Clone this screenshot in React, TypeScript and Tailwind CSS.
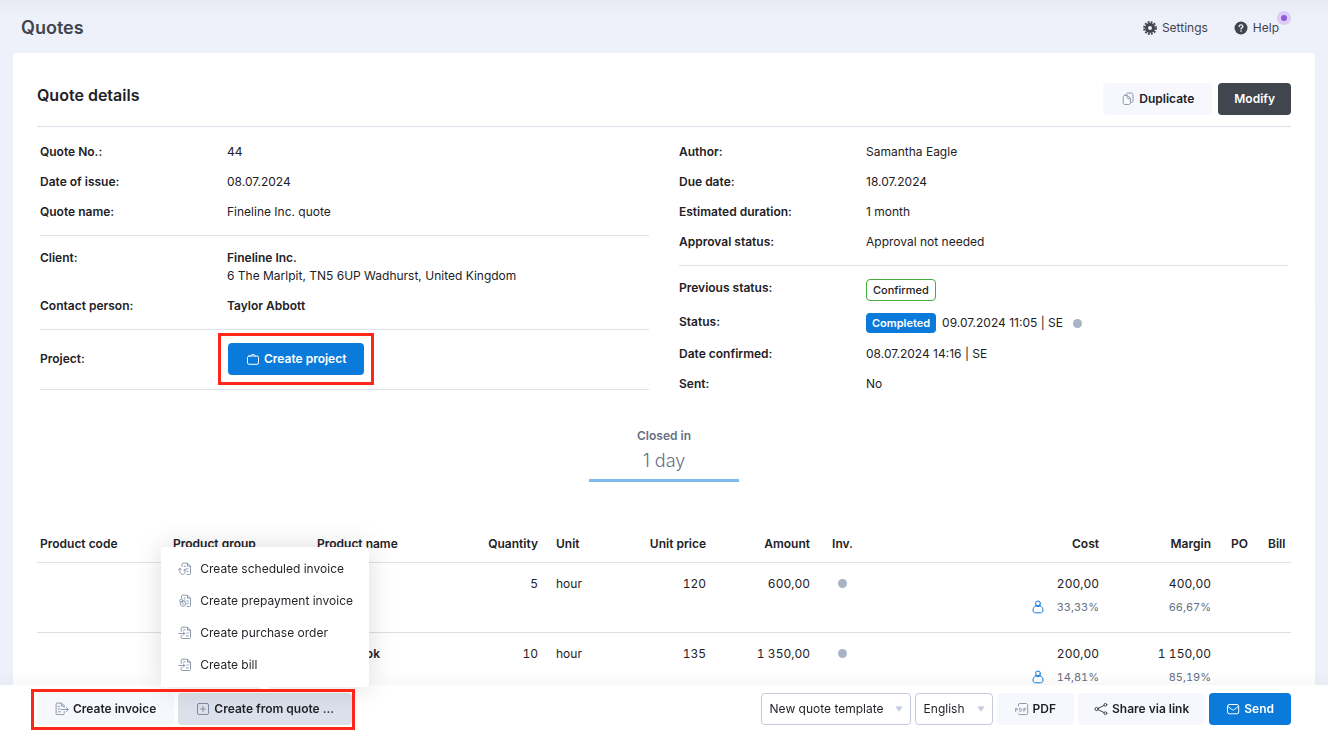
import type { ButtonHTMLAttributes, ReactNode } from "react";
import clsx from "clsx";

type IconProps = { className?: string };

function Icon({ className, children }: IconProps & { children: ReactNode }) {
  return (
    <svg
      viewBox="0 0 14 14"
      className={clsx("size-3.5 shrink-0", className)}
      fill="none"
      stroke="currentColor"
      strokeLinecap="round"
      strokeLinejoin="round"
      aria-hidden="true"
    >
      {children}
    </svg>
  );
}

const GearIcon = () => (
  <Icon>
    <circle cx="7" cy="7" r="3.5" strokeWidth="3" />
    <circle cx="7" cy="7" r="5.8" strokeWidth="2.2" strokeDasharray="1.8 1.24" strokeLinecap="butt" />
  </Icon>
);

const HelpIcon = () => (
  <Icon>
    <circle cx="7" cy="7" r="6.5" fill="currentColor" stroke="none" />
    <path d="M5.2 5.5C5.2 4.4 6 3.8 7 3.8s1.9.6 1.9 1.6C8.9 6.6 7 6.7 7 8" stroke="#eef0fa" strokeWidth="1.3" />
    <circle cx="7" cy="10.1" r=".8" fill="#eef0fa" stroke="none" />
  </Icon>
);

const CopyIcon = () => (
  <Icon className="text-[#8d9ab0]">
    <path d="M5.3 2.8V2.6c0-1 .6-1.6 1.6-1.6h3.2c1.2 0 1.9.7 1.9 1.9v6c0 1-.6 1.6-1.6 1.6h-.2" />
    <path d="M4 3.2h2.2l3.3 3.3v4.2c0 1.1-.7 1.8-1.8 1.8H4c-1.1 0-1.8-.7-1.8-1.8V5c0-1.1.7-1.8 1.8-1.8z" />
    <path d="M6.2 3.4v2.1c0 .7.4 1.1 1.1 1.1h2" />
  </Icon>
);

const BriefcaseIcon = () => (
  <Icon>
    <rect x="1.5" y="4" width="11" height="8.3" rx="1.5" />
    <path d="M4.7 4c.3-1 1-1.5 2.3-1.5S9 3 9.3 4" />
  </Icon>
);

const InvoiceOutIcon = () => (
  <Icon className="text-[#8d9ab0]">
    <path d="M9.2 9.5v2.2c0 .6-.3.9-.9.9H2c-.6 0-.9-.3-.9-.9V2c0-.6.3-.9.9-.9h4.5l2.7 2.7v1.5" />
    <path d="M6.3 1.3v2.7h2.7M3.2 4.5h1.2M3.2 7h2M3.2 9.8h2.3M6.5 7.5h6.8M11.4 5.5l2 2-2 2" />
  </Icon>
);

const PlusBoxIcon = () => (
  <Icon className="text-[#7f8ba1]">
    <rect x="1.5" y="1.5" width="11" height="11" rx="1.5" />
    <path d="M7 4.7v4.6M4.7 7h4.6" />
  </Icon>
);

const ScheduledIcon = () => (
  <Icon className="text-[#8d9ab0]">
    <path d="M4 4.5V2.2c0-.6.4-1 1-1h4.5l3 3v7.3c0 .6-.4 1-1 1H9" />
    <path d="M9.5 1.4v2.8h2.8M6.2 4.3h1.2M8.2 7h1.8M9 9.5h1" />
    <path d="M.7 7.7l1.1-1.4 1.5 1M1.8 6.600c-.6 3.400.5 5.600 2.700 5.700 1.700 0 2.800-1.100 2.800-2.700 0-.8-.3-1.500-.8-2M6.200 9V7.400h1.500" />
  </Icon>
);

const PrepaymentIcon = () => (
  <Icon className="text-[#8d9ab0]">
    <path d="M3.5 4V2.2c0-.6.4-1 1-1h5l3 3v7.3c0 .6-.4 1-1 1H9" />
    <path d="M9.5 1.4v2.8h2.8M6 4h1.3M8.8 7h1.5M9 9.6h1.3" />
    <circle cx="5" cy="9.6" r="2.7" />
    <circle cx="3.3" cy="6.8" r="1.6" />
    <path d="M4.2 9l1.6 1.2M6.3 5.8l.8.7" />
  </Icon>
);

const DocumentInIcon = () => (
  <Icon className="text-[#8d9ab0]">
    <path d="M3.2 5.3V2.2c0-.6.4-1 1-1h5.3l3 3v7.3c0 .6-.4 1-1 1H4.2c-.6 0-1-.4-1-1V9.7" />
    <path d="M9.5 1.4v2.8h2.8M5.5 3.9h1.6M9 7h1.3M8.2 9.9h2.1M.8 7.5h6M5 5.7l1.9 1.8L5 9.3" />
  </Icon>
);

const PdfIcon = () => (
  <Icon className="text-[#8d9ab0]">
    <path d="M3.5 4V2.8c0-.8.5-1.3 1.3-1.3H11c1 0 1.7.6 1.7 1.6v8.3c0 .8-.5 1.2-1.3 1.2H4.8c-.7 0-1.1-.3-1.3-.9" />
    <path
      d="M.6 9.4V6.3h1.2c1.2 0 1.2 1.7 0 1.7H.6M4.7 6.3v3.1h.7c2 0 2-3.1 0-3.1zM8.9 9.4V6.3h1.9M8.9 7.9h1.5"
      strokeWidth=".9"
    />
  </Icon>
);

const ShareIcon = () => (
  <Icon className="text-[#3d424b]">
    <circle cx="2.6" cy="7" r="1.6" />
    <circle cx="11.4" cy="2.8" r="1.4" />
    <circle cx="11.4" cy="11.2" r="1.4" />
    <path d="M4.2 6.3l5.9-2.9M4.2 7.7l5.9 2.9" />
  </Icon>
);

const MailIcon = () => (
  <Icon>
    <rect x="1.5" y="2.5" width="11.2" height="9.3" rx="1.8" />
    <path d="M2 4.5l3.9 3c.8.6 1.6.6 2.4 0l3.9-3" />
  </Icon>
);

const PersonIcon = () => (
  <Icon className="text-[#0a7bdb]">
    <circle cx="7" cy="3.4" r="2.4" />
    <path d="M4.9 5.6C3.3 6.5 2 8.3 2 10.1c0 1.8 1 2.7 2.5 2.7h5c1.5 0 2.5-.9 2.5-2.7 0-1.8-1.3-3.6-2.9-4.5" />
    <path d="M4.7 5.9c1.4.9 3.2.9 4.6 0" />
  </Icon>
);

type ButtonProps = ButtonHTMLAttributes<HTMLButtonElement> & {
  variant?: "light" | "active" | "dark" | "primary";
  icon?: ReactNode;
};

const variants = {
  light: "bg-[#f7f8fd] text-[#1e2126]",
  active: "bg-[#dce0ea] text-[#1e2126]",
  dark: "bg-[#41454e] text-white",
  primary: "bg-[#0a7bdb] text-white",
};

function Button({ variant = "light", icon, className, children, ...props }: ButtonProps) {
  return (
    <button
      type="button"
      className={clsx(
        "flex h-8 items-center gap-1 rounded font-semibold whitespace-nowrap",
        variants[variant],
        className ?? "px-[18px]",
      )}
      {...props}
    >
      {icon}
      {children}
    </button>
  );
}

function Row({ label, children }: { label: string; children: ReactNode }) {
  return (
    <div className="flex py-1.5">
      <dt className="w-[187px] shrink-0 font-semibold">{label}</dt>
      <dd className="min-w-0 flex-1">{children}</dd>
    </div>
  );
}

function Group({ last, children }: { last?: boolean; children: ReactNode }) {
  return <dl className={clsx("pt-[7px] pb-2", !last && "border-b border-[#dfe0ea]")}>{children}</dl>;
}

const Dot = () => <span className="inline-block size-[9px] rounded-full bg-[#a9b3c5]" />;

function Select({ label, options, className }: { label: string; options: string[]; className: string }) {
  return (
    <div className={clsx("relative", className)}>
      <select
        aria-label={label}
        className="h-8 w-full appearance-none rounded border border-[#c3cadb] bg-white pr-6 pl-2"
      >
        {options.map((o) => (
          <option key={o}>{o}</option>
        ))}
      </select>
      <svg viewBox="0 0 8 6" className="pointer-events-none absolute top-[13px] right-2 h-1.5 w-2" aria-hidden="true">
        <path d="M.5.5h7L4 5.7z" fill="#c3cadb" />
      </svg>
    </div>
  );
}

const items = [
  { name: "Planning", qty: "5", unit: "hour", price: "120", amount: "600,00", cost: "200,00", costPct: "33,33%", margin: "400,00", marginPct: "66,67%" },
  { name: "Guidebook", qty: "10", unit: "hour", price: "135", amount: "1 350,00", cost: "200,00", costPct: "14,81%", margin: "1 150,00", marginPct: "85,19%" },
];

const menu = [
  { label: "Create scheduled invoice", icon: <ScheduledIcon /> },
  { label: "Create prepayment invoice", icon: <PrepaymentIcon /> },
  { label: "Create purchase order", icon: <DocumentInIcon /> },
  { label: "Create bill", icon: <DocumentInIcon /> },
];

function ItemsTable() {
  return (
    <table className="w-full table-fixed text-left leading-[18px]">
      <colgroup>
        <col className="w-[127px]" />
        <col className="w-36" />
        <col className="w-[132px]" />
        <col className="w-[107px]" />
        <col className="w-[73px]" />
        <col className="w-[95px]" />
        <col className="w-[104px]" />
        <col className="w-[47px]" />
        <col />
        <col className="w-28" />
        <col className="w-[39px]" />
        <col className="w-8" />
      </colgroup>
      <thead>
        <tr className="h-[38px] border-b border-[#dbe0ea] whitespace-nowrap [&>th]:pt-0.5 [&>th]:font-semibold">
          <th className="pl-[3px]">Product code</th>
          <th className="pl-[9px]">Product group</th>
          <th className="pl-[9px]">Product name</th>
          <th className="pr-[9px] text-right">Quantity</th>
          <th className="pl-[9px]">Unit</th>
          <th className="pr-[9px] text-right">Unit price</th>
          <th className="pr-[9px] text-right">Amount</th>
          <th className="text-center">Inv.</th>
          <th className="pr-[9px] text-right">Cost</th>
          <th className="pr-[9px] text-right">Margin</th>
          <th className="text-center">PO</th>
          <th className="pl-[9px]">Bill</th>
        </tr>
      </thead>
      <tbody>
        {items.map((item) => (
          <tr key={item.name} className="h-[70px] border-b border-[#dbdfe5] align-top tabular-nums [&>td]:pt-3">
            <td></td>
            <td></td>
            <td className="pl-[9px] font-semibold">{item.name}</td>
            <td className="pr-[9px] text-right">{item.qty}</td>
            <td className="pl-[9px]">{item.unit}</td>
            <td className="pr-[9px] text-right">{item.price}</td>
            <td className="pr-[9px] text-right">{item.amount}</td>
            <td className="text-center">
              <Dot />
            </td>
            <td className="pr-[9px] text-right">
              {item.cost}
              <div className="mt-[5px] flex items-center justify-end gap-3 text-[11px] leading-[18px] text-[#667085]">
                <PersonIcon />
                {item.costPct}
              </div>
            </td>
            <td className="pr-[9px] text-right">
              {item.margin}
              <div className="mt-[5px] text-[11px] leading-[18px] text-[#667085]">{item.marginPct}</div>
            </td>
            <td></td>
            <td></td>
          </tr>
        ))}
      </tbody>
    </table>
  );
}

function App() {
  return (
    <div className="flex h-screen flex-col bg-[#eef0fa] font-['Inter',sans-serif] text-xs leading-[18px] text-[#1e2126]">
      <header className="flex h-[53px] shrink-0 items-center bg-linear-to-b from-[#e7eaf3] to-[#eef0fa] to-35% pt-0.5 pr-[49px] pl-[21px] text-[#41454e]">
        <h1 className="text-lg font-semibold">Quotes</h1>
        <nav className="ml-auto flex items-center gap-[26px]">
          <a href="#settings" className="flex items-center gap-[5px]">
            <GearIcon />
            Settings
          </a>
          <a href="#help" className="relative flex items-center gap-[5px]">
            <HelpIcon />
            Help
            <span className="absolute -top-2 -right-3 grid size-3.5 place-items-center rounded-full bg-[#dccbf7]">
              <span className="size-1.5 rounded-full bg-[#8f5bd6]" />
            </span>
          </a>
        </nav>
      </header>

      <main className="mx-[13px] min-h-0 flex-1 overflow-y-auto rounded-t bg-white px-6 pt-[30px] [scrollbar-width:none]">
        <div className="flex items-start gap-1.5 border-b border-[#dbe0ea] pb-[11px]">
          <h2 className="mr-auto text-base font-semibold">Quote details</h2>
          <Button icon={<CopyIcon />}>Duplicate</Button>
          <Button variant="dark" className="px-4">Modify</Button>
        </div>

        <section className="grid grid-cols-2 gap-[30px] px-[3px] pt-[3px]">
          <div>
            <Group>
              <Row label="Quote No.:">44</Row>
              <Row label="Date of issue:">08.07.2024</Row>
              <Row label="Quote name:">Fineline Inc. quote</Row>
            </Group>
            <Group>
              <Row label="Client:">
                <div className="font-semibold">Fineline Inc.</div>
                6 The Marlpit, TN5 6UP Wadhurst, United Kingdom
              </Row>
              <Row label="Contact person:">
                <span className="font-semibold">Taylor Abbott</span>
              </Row>
            </Group>
            <dl className="border-b border-[#dfe0ea] pt-[7px] pb-2">
              <div className="flex items-center py-1.5">
                <dt className="w-[188px] shrink-0 font-semibold">Project:</dt>
                <dd className="relative">
                  <Button variant="primary" icon={<BriefcaseIcon />}>Create project</Button>
                  <div className="pointer-events-none absolute -inset-2.5 border-3 border-[#fd2618]" />
                </dd>
              </div>
            </dl>
          </div>

          <div>
            <Group>
              <Row label="Author:">Samantha Eagle</Row>
              <Row label="Due date:">18.07.2024</Row>
              <Row label="Estimated duration:">1 month</Row>
              <Row label="Approval status:">Approval not needed</Row>
            </Group>
            <Group last>
              <Row label="Previous status:">
                <span className="flex h-[22px] w-fit items-center rounded border border-[#45ad3d] px-1.5 text-[11px] font-medium">
                  Confirmed
                </span>
              </Row>
              <Row label="Status:">
                <div className="flex items-center gap-1.5">
                  <span className="flex h-5 items-center rounded bg-[#0a7bdb] px-1.5 text-[11px] font-semibold text-white">
                    Completed
                  </span>
                  <span className="mr-1">09.07.2024 11:05 | SE</span>
                  <Dot />
                </div>
              </Row>
              <Row label="Date confirmed:">08.07.2024 14:16 | SE</Row>
              <Row label="Sent:">No</Row>
            </Group>
          </div>
        </section>

        <section className="mx-auto mt-5 w-[150px] border-b-3 border-[#80b9eb] pb-1.5 text-center text-[#667085]">
          <div className="font-semibold">Closed in</div>
          <div className="mt-1 text-lg leading-6 font-light">1 day</div>
        </section>

        <div className="mt-[42px]">
          <ItemsTable />
        </div>
      </main>

      <footer className="relative z-10 flex shrink-0 items-center gap-1 bg-white px-[37px] pt-2 pb-1.5 shadow-[0_-4px_16px_rgba(0,0,0,0.04)]">
        <div className="relative flex gap-1">
          <Button icon={<InvoiceOutIcon />}>Create invoice</Button>
          <div className="relative">
            <Button variant="active" icon={<PlusBoxIcon />} aria-haspopup="menu" aria-expanded>
              Create from quote ...
            </Button>
            <div
              role="menu"
              className="absolute bottom-full left-1/2 mb-1.5 w-52 -translate-x-1/2 rounded bg-white py-1.5 shadow-[0_0_28px_rgba(0,0,0,0.14)]"
            >
              {menu.map((m) => (
                <button
                  key={m.label}
                  type="button"
                  role="menuitem"
                  className="flex h-8 w-full items-center gap-2 pl-[17px] whitespace-nowrap"
                >
                  {m.icon}
                  {m.label}
                </button>
              ))}
              <svg viewBox="0 0 10 4" className="absolute top-full left-1/2 h-1 w-2.5 -translate-x-1/2" aria-hidden="true">
                <path d="M0 0h10L6 3.5q-1 .8-2 0z" fill="#fff" />
              </svg>
            </div>
          </div>
          <div className="pointer-events-none absolute -top-1 -right-[3px] -bottom-[5px] -left-1.5 border-3 border-[#fd2618]" />
        </div>

        <div className="ml-auto flex gap-1">
          <Select label="Template" options={["New quote template"]} className="w-[150px]" />
          <Select label="Language" options={["English"]} className="w-[78px]" />
          <Button icon={<PdfIcon />}>PDF</Button>
          <Button icon={<ShareIcon />} className="px-4">Share via link</Button>
          <Button variant="primary" icon={<MailIcon />} className="px-[17px]">Send</Button>
        </div>
      </footer>
    </div>
  );
}

export default App;
